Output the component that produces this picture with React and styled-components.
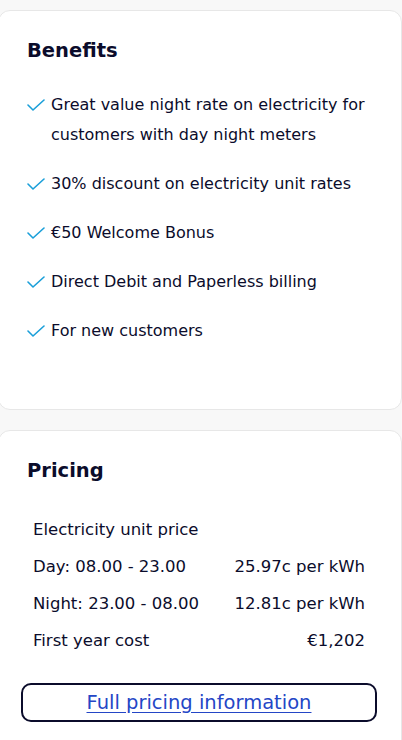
import React from 'react'
import styled, { createGlobalStyle } from 'styled-components'

const colors = {
  page: '#f8f8f8',
  border: '#e7e7e7',
  text: '#0b0c2b',
  check: '#1a9fd9',
  link: '#2446c6',
}

const GlobalStyle = createGlobalStyle`
  html, body {
    margin: 0;
    padding: 0;
    background: ${colors.page};
  }
  body {
    font-family: 'DejaVu Sans', 'Open Sans', sans-serif;
    color: ${colors.text};
  }
  * {
    box-sizing: border-box;
  }
`

const Page = styled.div`
  display: flex;
  flex-direction: column;
  gap: 20px;
  padding-top: 10px;
  margin-left: -2px;
  width: 404px;
  overflow: hidden;
`

const Card = styled.section`
  background: #fff;
  border: 1px solid ${colors.border};
  border-radius: 12px;
  padding: ${(p) => p.$padding || '26px 28px 63px 28px'};
`

const Heading = styled.h2`
  margin: 0;
  font-size: 19.5px;
  line-height: 27px;
  font-weight: 700;
`

const List = styled.ul`
  list-style: none;
  margin: 26px 0 0;
  padding: 0;
  display: flex;
  flex-direction: column;
  gap: 19px;
`

const Item = styled.li`
  display: flex;
  align-items: flex-start;
  gap: 6px;
  font-size: 16px;
  line-height: 30px;
`

const CheckWrap = styled.span`
  flex: 0 0 18px;
  height: 30px;
  display: flex;
  align-items: center;
`

const Rows = styled.div`
  margin: 27px 8px 0 6px;
  display: flex;
  flex-direction: column;
`

const Row = styled.div`
  display: flex;
  justify-content: space-between;
  font-size: 16.5px;
  line-height: 37px;
`

const Button = styled.a`
  display: flex;
  align-items: center;
  justify-content: center;
  margin: 24px -4px 0 -6px;
  height: 39px;
  border: 2px solid ${colors.text};
  border-radius: 10px;
  color: ${colors.link};
  font-size: 19.5px;
  text-decoration: underline;
  text-underline-offset: 3px;
  cursor: pointer;
`

const Check = () => (
  <svg width="18" height="12" viewBox="0 0 18 12" fill="none">
    <polyline points="1,6 6,11 17,1" stroke={colors.check} strokeWidth="1.6" strokeLinecap="round" strokeLinejoin="round" />
  </svg>
)

const benefits = [
  'Great value night rate on electricity for customers with day night meters',
  '30% discount on electricity unit rates',
  '€50 Welcome Bonus',
  'Direct Debit and Paperless billing',
  'For new customers',
]

const prices = [
  ['Electricity unit price', ''],
  ['Day: 08.00 - 23.00', '25.97c per kWh'],
  ['Night: 23.00 - 08.00', '12.81c per kWh'],
  ['First year cost', '€1,202'],
]

const App = () => (
  <>
    <GlobalStyle />
    <Page>
      <Card>
        <Heading>Benefits</Heading>
        <List>
          {benefits.map((b) => (
            <Item key={b}>
              <CheckWrap>
                <Check />
              </CheckWrap>
              <span>{b}</span>
            </Item>
          ))}
        </List>
      </Card>
      <Card $padding="26px 28px 40px 28px">
        <Heading>Pricing</Heading>
        <Rows>
          {prices.map(([label, value]) => (
            <Row key={label}>
              <span>{label}</span>
              <span>{value}</span>
            </Row>
          ))}
        </Rows>
        <Button>Full pricing information</Button>
      </Card>
    </Page>
  </>
)

export default App
